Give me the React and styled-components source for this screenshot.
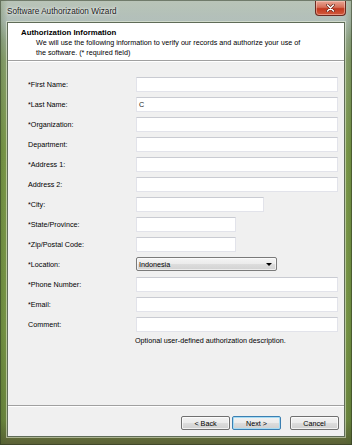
import styled, { createGlobalStyle } from 'styled-components';

const GlobalStyle = createGlobalStyle`
  html, body {
    margin: 0;
    padding: 0;
    width: 352px;
    height: 445px;
    overflow: hidden;
    font-family: "Liberation Sans", Arial, sans-serif;
  }
`;

const Window = styled.div`
  width: 352px;
  height: 445px;
  box-sizing: border-box;
  padding: 0 7px 8px 7px;
  display: flex;
  flex-direction: column;
  background:
    linear-gradient(180deg, rgba(255, 255, 255, 0.28) 0, rgba(255, 255, 255, 0.12) 21px, rgba(255, 255, 255, 0) 40px),
    linear-gradient(90deg, rgba(70, 100, 40, 0.35) 0, rgba(0, 0, 0, 0) 8px, rgba(0, 0, 0, 0) 344px, rgba(70, 100, 40, 0.35) 352px),
    linear-gradient(180deg, #9eae9c 0, #a7b6b0 20px, #8ea474 60px, #7f9c4c 150px, #7b9848 330px, #6e8840 420px, #5a5f36 445px);
  box-shadow: inset 0 0 0 1px rgba(40, 50, 30, 0.5);
`;

const TitleBar = styled.div`
  height: 22px;
  flex: none;
  display: flex;
  align-items: flex-start;
  justify-content: space-between;
`;

const Title = styled.span`
  margin-top: 7px;
  font-size: 8.2px;
  line-height: 10px;
  color: #1a1a1a;
  text-shadow: 0 0 4px rgba(255, 255, 255, 0.9), 0 0 2px rgba(255, 255, 255, 0.9);
`;

const CloseButton = styled.div`
  width: 31px;
  height: 15px;
  margin-top: 1px;
  margin-right: -1px;
  box-sizing: border-box;
  border: 1px solid #6b2a20;
  border-top: none;
  border-radius: 0 0 4px 4px;
  background: linear-gradient(180deg, #e9a594 0%, #d66f58 45%, #c2391f 55%, #d25a3c 100%);
  box-shadow: inset 0 0 0 1px rgba(255, 220, 210, 0.45);
  display: flex;
  align-items: center;
  justify-content: center;
`;

const Client = styled.div`
  flex: 1;
  display: flex;
  flex-direction: column;
  background: #f0f0f0;
  border: 1px solid #5f6c58;
  box-shadow: 0 0 0 1px rgba(235, 240, 220, 0.55);
  color: #000;
`;

const Header = styled.div`
  height: 38px;
  flex: none;
  background: #fff;
  padding: 5px 0 0 13px;
  box-sizing: border-box;
  border-bottom: 1px solid #a0a0a0;
  box-shadow: 0 1px 0 #fff;
`;

const HeaderTitle = styled.div`
  font-size: 7.8px;
  font-weight: bold;
  line-height: 10px;
`;

const HeaderText = styled.div`
  margin-left: 15px;
  font-size: 7.2px;
  line-height: 10px;
`;

const Form = styled.div`
  flex: 1;
  padding: 13px 6px 0 20px;
`;

const Row = styled.div`
  display: grid;
  grid-template-columns: 108px 1fr;
  align-items: center;
  height: 20px;
`;

const Label = styled.span`
  font-size: 7.2px;
  line-height: 10px;
  padding-top: 1px;
`;

const TextBox = styled.div`
  width: ${({ $w }) => $w || 202}px;
  height: 15px;
  box-sizing: border-box;
  background: #fff;
  border: 1px solid #e2e3ea;
  border-top-color: #c9cbd2;
  font-size: 7.2px;
  line-height: 13px;
  padding-left: 2px;
  color: #222;
`;

const Select = styled.div`
  width: 141px;
  height: 14px;
  box-sizing: border-box;
  border: 1px solid #7a7a7a;
  border-radius: 2px;
  background: linear-gradient(180deg, #f4f4f4 0%, #ebebeb 50%, #dddddd 51%, #d2d2d2 100%);
  box-shadow: inset 0 0 0 1px rgba(255, 255, 255, 0.6);
  display: flex;
  align-items: center;
  justify-content: space-between;
  padding: 0 4px 0 2px;
  font-size: 7.2px;
`;

const Arrow = styled.span`
  width: 0;
  height: 0;
  border-left: 3px solid transparent;
  border-right: 3px solid transparent;
  border-top: 3px solid #000;
`;

const Hint = styled.div`
  margin-left: 107px;
  margin-top: 2px;
  font-size: 7.2px;
  line-height: 10px;
`;

const Footer = styled.div`
  flex: none;
  height: 31px;
  box-sizing: border-box;
  border-top: 1px solid #a0a0a0;
  box-shadow: inset 0 1px 0 #fff;
  display: flex;
  justify-content: flex-end;
  align-items: flex-start;
  padding: 10px 5px 0 0;
`;

const Button = styled.div`
  width: 49px;
  height: 14px;
  box-sizing: border-box;
  margin-left: ${({ $gap }) => $gap || 0}px;
  border: 1px solid ${({ $focus }) => ($focus ? '#3c7fb1' : '#707070')};
  border-radius: 2px;
  background: linear-gradient(180deg, #f2f2f2 0%, #ebebeb 50%, #dddddd 51%, #cfcfcf 100%);
  box-shadow: inset 0 0 0 1px ${({ $focus }) => ($focus ? '#a5dcf5' : 'rgba(255,255,255,0.7)')};
  font-size: 7.2px;
  display: flex;
  align-items: center;
  justify-content: center;
`;

const fields = [
  { label: '*First Name:' },
  { label: '*Last Name:', value: 'C' },
  { label: '*Organization:' },
  { label: 'Department:' },
  { label: '*Address 1:' },
  { label: 'Address 2:' },
  { label: '*City:', width: 128 },
  { label: '*State/Province:', width: 100 },
  { label: '*Zip/Postal Code:', width: 100 },
];

const fields2 = [
  { label: '*Phone Number:' },
  { label: '*Email:' },
  { label: 'Comment:' },
];

const App = () => (
  <>
    <GlobalStyle />
    <Window>
      <TitleBar>
        <Title>Software Authorization Wizard</Title>
        <CloseButton>
          <svg width="9" height="8" viewBox="0 0 9 8">
            <path d="M1.5 1 L7.5 7 M7.5 1 L1.5 7" stroke="#5a1c10" strokeWidth="2.6" strokeLinecap="round" />
            <path d="M1.5 1 L7.5 7 M7.5 1 L1.5 7" stroke="#fff" strokeWidth="1.5" strokeLinecap="round" />
          </svg>
        </CloseButton>
      </TitleBar>
      <Client>
        <Header>
          <HeaderTitle>Authorization Information</HeaderTitle>
          <HeaderText>
            We will use the following information to verify our records and authorize your use of
            <br />
            the software. (* required field)
          </HeaderText>
        </Header>
        <Form>
          {fields.map((f) => (
            <Row key={f.label}>
              <Label>{f.label}</Label>
              <TextBox $w={f.width}>{f.value}</TextBox>
            </Row>
          ))}
          <Row>
            <Label>*Location:</Label>
            <Select>
              <span>Indonesia</span>
              <Arrow />
            </Select>
          </Row>
          {fields2.map((f) => (
            <Row key={f.label}>
              <Label>{f.label}</Label>
              <TextBox $w={f.width}>{f.value}</TextBox>
            </Row>
          ))}
          <Hint>Optional user-defined authorization description.</Hint>
        </Form>
        <Footer>
          <Button>&lt; Back</Button>
          <Button $gap={2} $focus>Next &gt;</Button>
          <Button $gap={9}>Cancel</Button>
        </Footer>
      </Client>
    </Window>
  </>
);

export default App;
